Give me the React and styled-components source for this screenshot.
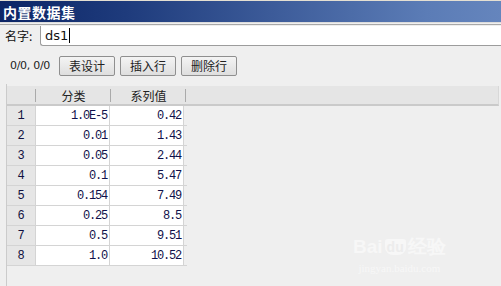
import React from 'react';
import styled, { createGlobalStyle } from 'styled-components';

const GlobalStyle = createGlobalStyle`
    body { margin: 0; background: #efefef; font-family: "Noto Sans CJK SC", "DejaVu Sans", sans-serif; }
`;

const Wrap = styled.div`
    width: 501px; height: 286px;
    display: flex; flex-direction: column;
    overflow: hidden;
    background: #efefef;
`;

const TitleBar = styled.div`
    height: 21px;
    border-top: 1px solid #e4dfd2;
    padding-left: 3px;
    display: flex; align-items: center;
    background: linear-gradient(90deg, #0c2566 0%, #1e3b7c 25%, #3d5c9a 55%, #5b7cb6 85%, #6585bd 100%);
    color: #fff;
    font-size: 14px; font-weight: bold;
    letter-spacing: 0.5px;
    border-bottom: 1px solid #dcdcdc;
`;

const NameRow = styled.div`
    display: flex; align-items: center;
    height: 21px;
    border-top: 1px solid #a8a8a8;
    margin-top: 1px;
`;

const Label = styled.span`
    width: 40px;
    padding-left: 5px;
    box-sizing: border-box;
    font-size: 12px;
    color: #111;
`;

const NameInput = styled.div`
    flex: 1;
    height: 19px;
    display: flex; align-items: center;
    padding-left: 4px;
    background: #fff;
    border: 1px solid #9c9c9c;
    border-top: none; border-right: none;
    border-radius: 0 0 0 3px;
    font-family: "DejaVu Sans", sans-serif;
    font-size: 13px;
    color: #111;
`;

const Caret = styled.span`
    width: 1px; height: 15px;
    margin-left: 1px;
    background: #000;
`;

const ToolRow = styled.div`
    display: flex; align-items: center;
    gap: 5px;
    height: 21px;
    margin-top: 9px;
    padding-left: 10px;
`;

const Position = styled.span`
    width: 44px;
    font-family: "DejaVu Sans", sans-serif;
    font-size: 11px;
    letter-spacing: -0.3px;
    color: #222;
`;

const Btn = styled.button`
    width: 56px; height: 20px;
    padding: 0;
    border: 1px solid #8f8f8f;
    border-radius: 2px;
    background: linear-gradient(#f4f4f4, #dedede);
    font-family: "Noto Sans CJK SC", sans-serif;
    font-size: 12px;
    color: #222;
`;

const GridArea = styled.div`
    position: relative;
    flex: 1;
    margin: 8px 2px 0 6px;
    border-left: 1px solid #cbcbcb;
    display: flex; flex-direction: column;
`;

const HeaderRow = styled.div`
    display: flex;
    height: 18px;
    margin-top: 2px;
    background: #e5e5e5;
    border-bottom: 2px solid #cacaca;
    border-right: 1px solid #d8d8d8;
`;

const HeadCell = styled.div`
    position: relative;
    width: ${p => p.$w}px;
    display: flex; align-items: center; justify-content: center;
    font-size: 12px;
    color: #222;

    &:after {
        content: '';
        position: absolute; right: 0; top: 3px;
        width: 1px; height: 13px;
        background: #aaa;
    }
`;

const Row = styled.div`
    display: flex;
    height: 19px;
    width: 180px;
    border-bottom: 1px solid #d4d4d4;
`;

const RowNum = styled.div`
    width: 28px;
    border-right: 1px solid #d4d4d4;
    background: #e6e6e6;
    display: flex; align-items: center; justify-content: center;
    font-family: "Liberation Mono", monospace;
    font-size: 12px;
    color: #101040;
`;

const Cell = styled.div`
    width: 74px;
    border-right: 1px solid #d4d4d4;
    background: #fff;
    display: flex; align-items: center; justify-content: flex-end;
    padding-right: 2px;
    box-sizing: border-box;
    font-family: "Liberation Mono", monospace;
    font-size: 12px;
    letter-spacing: -1.2px;
    color: #10104a;
`;

// faint watermark in the bottom right corner
const Watermark = styled.div`
    position: absolute; left: 346px; top: 150px;
    display: flex; flex-direction: column; align-items: center;
    color: #f7f7f7;
`;

const Brand = styled.div`
    display: flex; align-items: center;
    font-family: "Liberation Sans", sans-serif;
    font-size: 19px; font-weight: bold;
`;

const Paw = styled.span`
    margin: 0 2px;
    padding: 0 2px;
    border-radius: 3px 3px 8px 8px;
    background: #f7f7f7;
    color: #ececec;
    font-size: 14px;
`;

const Url = styled.div`
    font-family: "Liberation Serif", serif;
    font-size: 11px;
    margin-top: 2px;
`;

const rows = [
    ['1.0E-5', '0.42'],
    ['0.01', '1.43'],
    ['0.05', '2.44'],
    ['0.1', '5.47'],
    ['0.154', '7.49'],
    ['0.25', '8.5'],
    ['0.5', '9.51'],
    ['1.0', '10.52'],
];

function App() {
    return (
        <Wrap>
            <GlobalStyle />
            <TitleBar>内置数据集</TitleBar>
            <NameRow>
                <Label>名字:</Label>
                <NameInput>ds1<Caret /></NameInput>
            </NameRow>
            <ToolRow>
                <Position>0/0, 0/0</Position>
                <Btn>表设计</Btn>
                <Btn>插入行</Btn>
                <Btn>删除行</Btn>
            </ToolRow>
            <GridArea>
                <HeaderRow>
                    <HeadCell $w={29} />
                    <HeadCell $w={75}>分类</HeadCell>
                    <HeadCell $w={75}>系列值</HeadCell>
                </HeaderRow>
                {rows.map((r, i) => (
                    <Row key={i}>
                        <RowNum>{i + 1}</RowNum>
                        <Cell>{r[0]}</Cell>
                        <Cell>{r[1]}</Cell>
                    </Row>
                ))}
                <Watermark>
                    <Brand>Bai<Paw>du</Paw>经验</Brand>
                    <Url>jingyan.baidu.com</Url>
                </Watermark>
            </GridArea>
        </Wrap>
    )
}

export default App;
